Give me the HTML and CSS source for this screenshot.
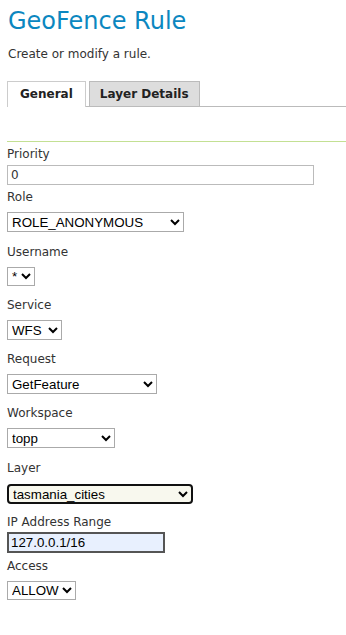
FILE: index.html
```html
<!DOCTYPE html>
<html lang="en">
<head>
  <meta charset="UTF-8">
  <title>GeoFence Rule</title>
  <link rel="stylesheet" href="styles.css">
</head>
<body>
  <div class="page">
    <h1 class="page__title">GeoFence Rule</h1>
    <p class="page__intro">Create or modify a rule.</p>

    <ul class="tabs">
      <li class="tabs__item tabs__item--active">General</li>
      <li class="tabs__item">Layer Details</li>
    </ul>

    <form class="rule-form">
      <div class="field">
        <label class="field__label" for="priority">Priority</label>
        <input class="field__text field__text--priority" id="priority" type="text" value="0">
      </div>

      <div class="field">
        <label class="field__label" for="role">Role</label>
        <select class="field__select field__select--role" id="role">
          <option>ROLE_ANONYMOUS</option>
        </select>
      </div>

      <div class="field">
        <label class="field__label" for="username">Username</label>
        <select class="field__select field__select--username" id="username">
          <option>*</option>
        </select>
      </div>

      <div class="field">
        <label class="field__label" for="service">Service</label>
        <select class="field__select field__select--service" id="service">
          <option>WFS</option>
        </select>
      </div>

      <div class="field">
        <label class="field__label" for="request">Request</label>
        <select class="field__select field__select--request" id="request">
          <option>GetFeature</option>
        </select>
      </div>

      <div class="field">
        <label class="field__label" for="workspace">Workspace</label>
        <select class="field__select field__select--workspace" id="workspace">
          <option>topp</option>
        </select>
      </div>

      <div class="field">
        <label class="field__label" for="layer">Layer</label>
        <select class="field__select field__select--layer is-focused" id="layer">
          <option>tasmania_cities</option>
        </select>
      </div>

      <div class="field">
        <label class="field__label" for="ip">IP Address Range</label>
        <input class="field__text field__text--ip" id="ip" type="text" value="127.0.0.1/16">
      </div>

      <div class="field">
        <label class="field__label" for="access">Access</label>
        <select class="field__select field__select--access" id="access">
          <option>ALLOW</option>
        </select>
      </div>
    </form>
  </div>
</body>
</html>
```

FILE: styles.css
```css
body, html {
  margin: 0;
  background: #fff;
}

.page {
  padding: 0 0 0 7px;
  font-family: "DejaVu Sans", Verdana, sans-serif;
  color: #333;
}

.page__title {
  margin: 0;
  padding: 7px 0 0 1px;
  font-size: 24px;
  font-weight: normal;
  line-height: 28px;
  color: #0b87c0;
}

.page__intro {
  margin: 12px 0 0 1px;
  font-size: 12px;
  line-height: 14px;
}

/* tab strip */
.tabs {
  display: flex;
  gap: 3px;
  margin: 20px 0 0;
  padding: 0;
  list-style: none;
  border-bottom: 1px solid #bbb;
}

.tabs__item {
  height: 24px;
  padding: 0 10px;
  margin-bottom: -1px;
  font-size: 12px;
  font-weight: bold;
  line-height: 25px;
  color: #222;
  background: #ddd;
  border: 1px solid #bbb;
  border-bottom: none;
}

.tabs__item--active {
  padding: 0 12px;
  background: #fff;
  border-color: #ccc;
  height: 25px;
}

.rule-form {
  margin-top: 34px;
  border-top: 1px solid #c3e093;
  padding-top: 5px;
}

.field__label {
  display: block;
  font-size: 12px;
  line-height: 14px;
  color: #333;
}

.field__text {
  display: block;
  box-sizing: border-box;
  margin: 3px 0 6px;
  height: 20px;
  padding: 0 3px;
  border: 1px solid #bbb;
  background: #fff;
  font-family: "DejaVu Sans", Verdana, sans-serif;
  font-size: 12px;
  color: #333;
}

.field__text--priority {
  width: 307px;
  margin: 4px 0 5px;
}

.field__text--ip {
  width: 158px;
  height: 21px;
  padding: 0 2px;
  border: 2px solid #555;
  background: #e8f0fe;
  font-family: "Liberation Sans", Arial, sans-serif;
  font-size: 13.33px;
  color: #000;
}

.field__select {
  display: block;
  box-sizing: border-box;
  margin: 8px 0 12px;
  height: 20px;
  border: 1px solid #aaa;
  border-radius: 0;
  background: #fff;
  font-family: "Liberation Sans", Arial, sans-serif;
  font-size: 13.33px;
  color: #000;
}

.field__select--role { width: 177px; margin-bottom: 13px; }
.field__select--username { width: 28px; height: 19px; }
.field__select--service { width: 55px; }
.field__select--request { width: 150px; }
.field__select--workspace { width: 108px; margin-bottom: 13px; }
.field__select--access { width: 69px; height: 19px; }

.field__select--layer {
  width: 186px;
  height: 20px;
  margin: 9px 0 11px;
}

.field__select.is-focused {
  border: 2px solid #111;
  border-radius: 4px;
  background: #f8f8ee;
  outline: none;
}
```
